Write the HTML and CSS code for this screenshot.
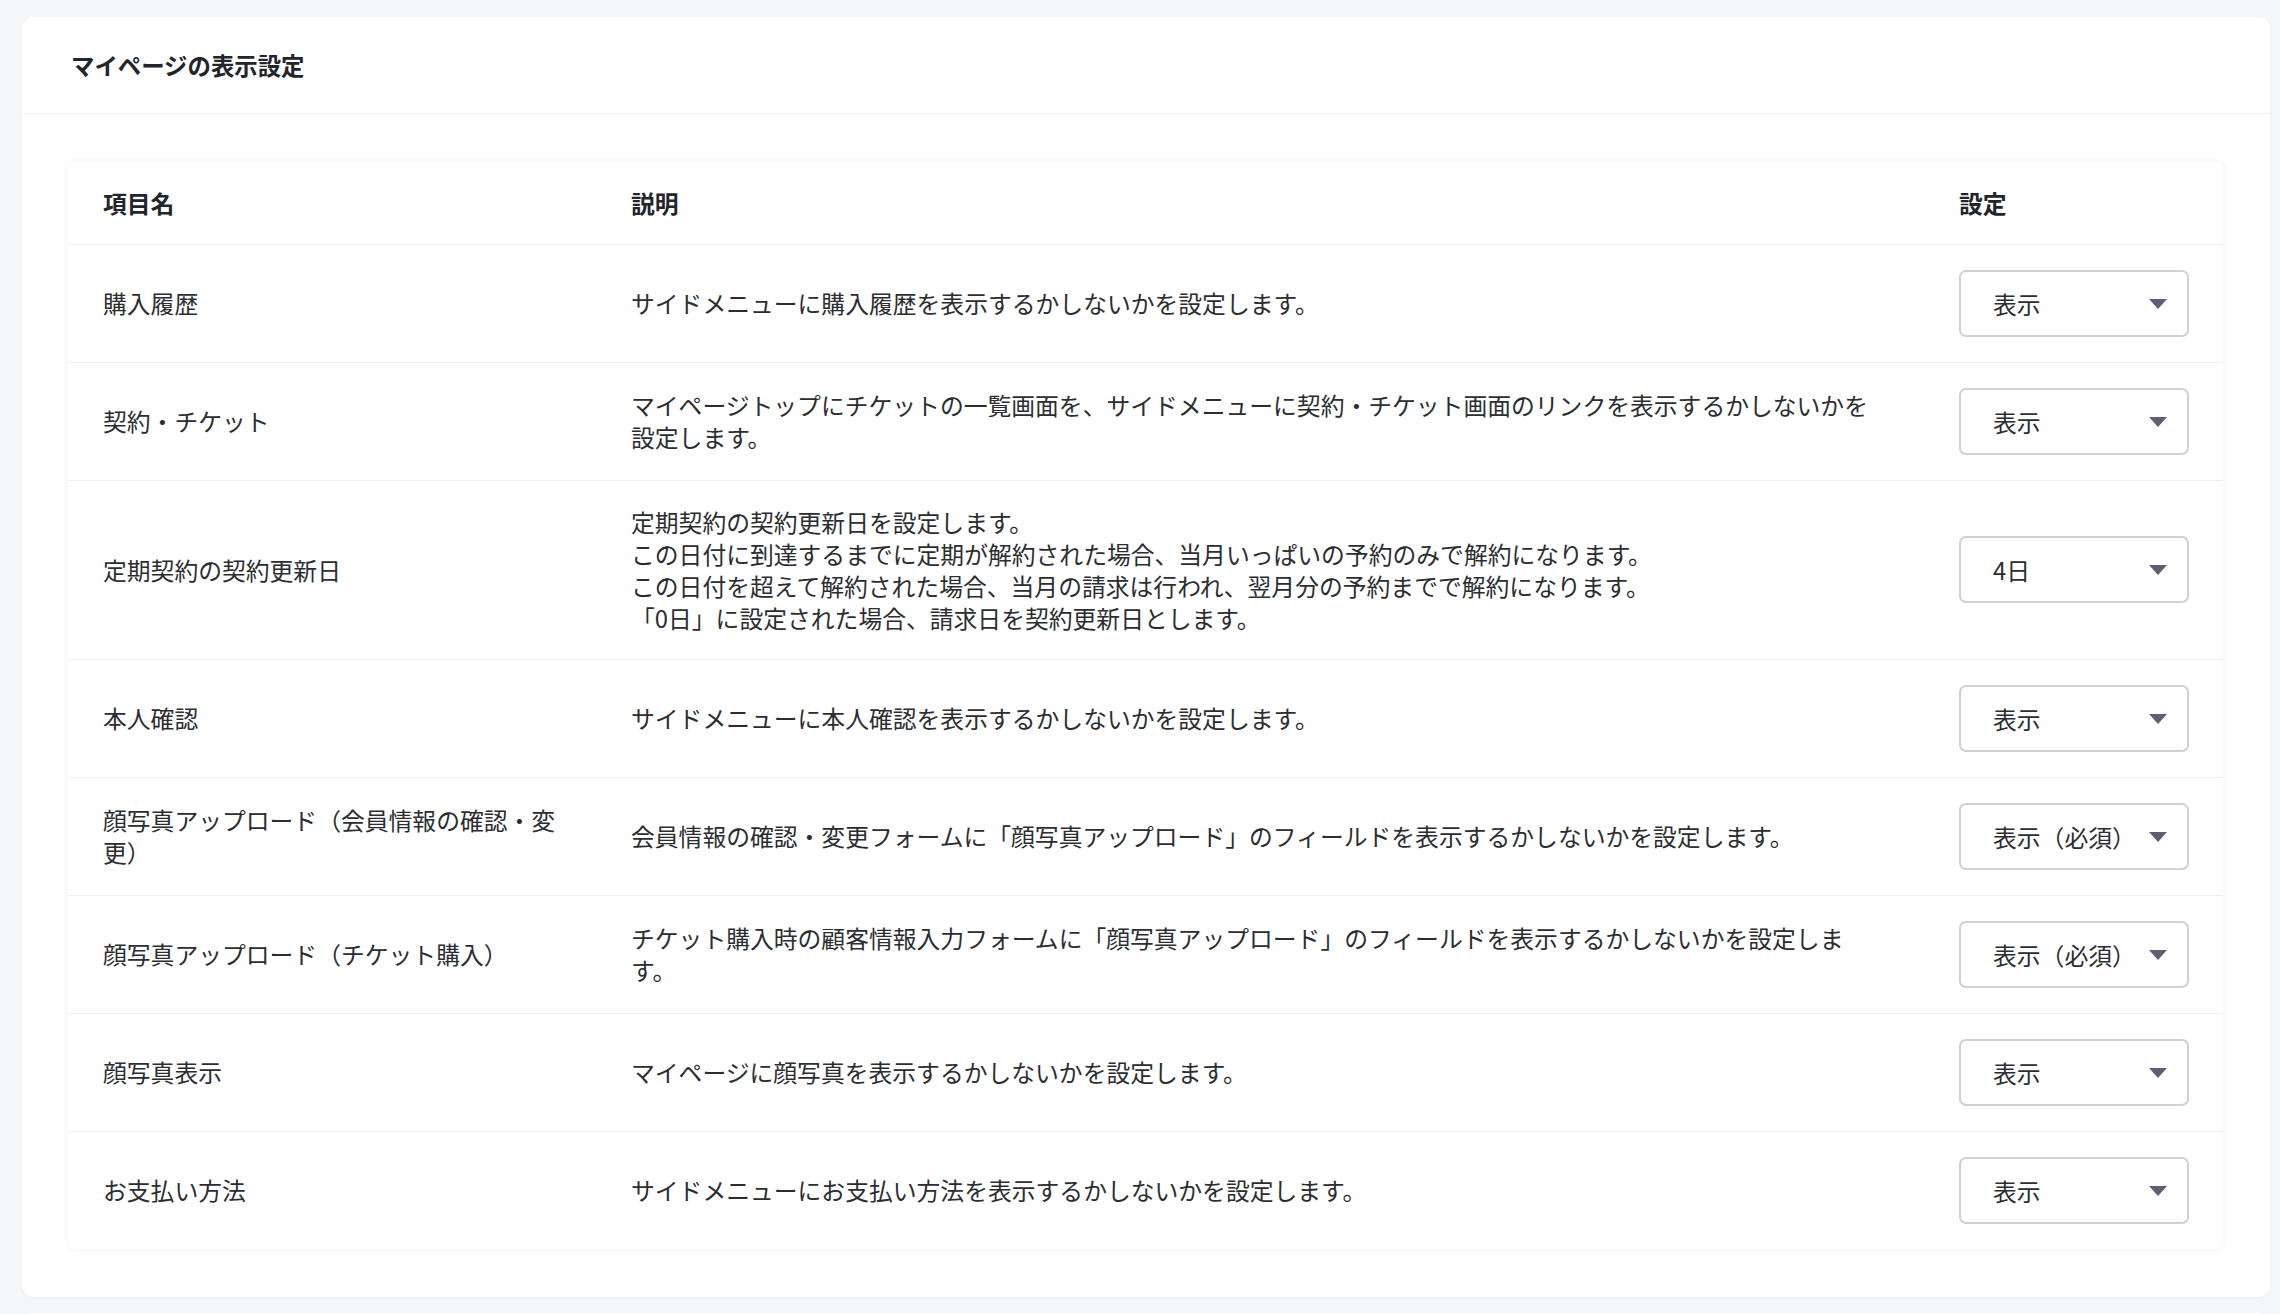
FILE: index.html
```html
<!DOCTYPE html>
<html lang="ja">
<head>
  <meta charset="UTF-8">
  <title>マイページの表示設定</title>
  <link rel="stylesheet" href="styles.css">
</head>
<body>
  <section class="card">
    <header class="card-header">
      <h1>マイページの表示設定</h1>
    </header>
    <div class="card-body">
      <div class="table-wrap">
        <table class="settings">
          <colgroup>
            <col class="col-name">
            <col class="col-desc">
            <col class="col-value">
          </colgroup>
          <thead>
            <tr>
              <th>項目名</th>
              <th class="desc">説明</th>
              <th>設定</th>
            </tr>
          </thead>
          <tbody>
            <tr>
              <td>購入履歴</td>
              <td class="desc">サイドメニューに購入履歴を表示するかしないかを設定します。</td>
              <td>
                <div class="select">
                  <select><option>表示</option><option>非表示</option></select>
                  <svg class="caret" width="18" height="10" viewBox="0 0 18 10"><path d="M0 0h18L9 10z"/></svg>
                </div>
              </td>
            </tr>
            <tr>
              <td>契約・チケット</td>
              <td class="desc">マイページトップにチケットの一覧画面を、サイドメニューに契約・チケット画面のリンクを表示するかしないかを設定します。</td>
              <td>
                <div class="select">
                  <select><option>表示</option><option>非表示</option></select>
                  <svg class="caret" width="18" height="10" viewBox="0 0 18 10"><path d="M0 0h18L9 10z"/></svg>
                </div>
              </td>
            </tr>
            <tr>
              <td>定期契約の契約更新日</td>
              <td class="desc">
                <p>定期契約の契約更新日を設定します。</p>
                <p>この日付に到達するまでに定期が解約された場合、当月いっぱいの予約のみで解約になります。</p>
                <p>この日付を超えて解約された場合、当月の請求は行われ、翌月分の予約までで解約になります。</p>
                <p>「0日」に設定された場合、請求日を契約更新日とします。</p>
              </td>
              <td>
                <div class="select">
                  <select><option>0日</option><option>1日</option><option>2日</option><option>3日</option><option selected>4日</option><option>5日</option></select>
                  <svg class="caret" width="18" height="10" viewBox="0 0 18 10"><path d="M0 0h18L9 10z"/></svg>
                </div>
              </td>
            </tr>
            <tr>
              <td>本人確認</td>
              <td class="desc">サイドメニューに本人確認を表示するかしないかを設定します。</td>
              <td>
                <div class="select">
                  <select><option>表示</option><option>非表示</option></select>
                  <svg class="caret" width="18" height="10" viewBox="0 0 18 10"><path d="M0 0h18L9 10z"/></svg>
                </div>
              </td>
            </tr>
            <tr>
              <td>顔写真アップロード（会員情報の確認・変更）</td>
              <td class="desc">会員情報の確認・変更フォームに「顔写真アップロード」のフィールドを表示するかしないかを設定します。</td>
              <td>
                <div class="select">
                  <select><option>表示（必須）</option><option>表示</option><option>非表示</option></select>
                  <svg class="caret" width="18" height="10" viewBox="0 0 18 10"><path d="M0 0h18L9 10z"/></svg>
                </div>
              </td>
            </tr>
            <tr>
              <td>顔写真アップロード（チケット購入）</td>
              <td class="desc">チケット購入時の顧客情報入力フォームに「顔写真アップロード」のフィールドを表示するかしないかを設定します。</td>
              <td>
                <div class="select">
                  <select><option>表示（必須）</option><option>表示</option><option>非表示</option></select>
                  <svg class="caret" width="18" height="10" viewBox="0 0 18 10"><path d="M0 0h18L9 10z"/></svg>
                </div>
              </td>
            </tr>
            <tr>
              <td>顔写真表示</td>
              <td class="desc">マイページに顔写真を表示するかしないかを設定します。</td>
              <td>
                <div class="select">
                  <select><option>表示</option><option>非表示</option></select>
                  <svg class="caret" width="18" height="10" viewBox="0 0 18 10"><path d="M0 0h18L9 10z"/></svg>
                </div>
              </td>
            </tr>
            <tr>
              <td>お支払い方法</td>
              <td class="desc">サイドメニューにお支払い方法を表示するかしないかを設定します。</td>
              <td>
                <div class="select">
                  <select><option>表示</option><option>非表示</option></select>
                  <svg class="caret" width="18" height="10" viewBox="0 0 18 10"><path d="M0 0h18L9 10z"/></svg>
                </div>
              </td>
            </tr>
          </tbody>
        </table>
      </div>
    </div>
  </section>

  <section class="card card-next"></section>
</body>
</html>
```

FILE: styles.css
```css
:root {
  --bg: #f5f6f8;
  --card: #ffffff;
  --line: #eef0f2;
  --text: #2b2d31;
  --text-strong: #22252b;
  --field-border: #cfd0d8;
  --caret: #5d6073;
  --radius: 12px;
}
* { box-sizing: border-box; margin: 0; padding: 0; }
body {
  font-family: "Noto Sans CJK JP", "Noto Sans", sans-serif;
  font-size: 23.8px;
  color: var(--text);
  background: var(--bg);
  padding: 17px 10px 0 22px;
}

.card {
  background: var(--card);
  border-radius: var(--radius);
  box-shadow: 0 1px 3px rgba(0,0,0,0.04);
}
.card-next { margin-top: 16px; height: 200px; }

.card-header {
  height: 97px;
  display: flex;
  align-items: center;
  padding: 0 49px;
  border-bottom: 1px solid var(--line);
}
.card-header h1 {
  font-size: 23.4px;
  font-weight: 700;
  color: var(--text-strong);
}

.card-body { padding: 48px 47px 48px 46px; }

.table-wrap {
  border-radius: 8px;
  overflow: hidden;
  box-shadow: 0 0 8px rgba(20,30,50,0.06);
}

table.settings {
  width: 100%;
  border-collapse: collapse;
  table-layout: fixed;
}
.col-name { width: 528px; }
.col-value { width: 299px; }

.settings th {
  height: 82px;
  padding: 0 35px;
  text-align: left;
  font-weight: 700;
  color: var(--text-strong);
  border-bottom: 1px solid var(--line);
}
.settings td {
  padding: 25px 35px;
  line-height: 32px;
  vertical-align: middle;
  border-bottom: 1px solid var(--line);
}
.settings tbody tr:last-child td { border-bottom: none; }
.settings .desc { padding-right: 44px; }

.select {
  position: relative;
  width: 230px;
}
.select select {
  appearance: none;
  -webkit-appearance: none;
  width: 100%;
  height: 67px;
  padding: 0 50px 0 32px;
  font-family: inherit;
  font-size: 23.8px;
  color: var(--text);
  background: #fff;
  border: 2px solid var(--field-border);
  border-radius: 7px;
  outline: none;
}
.select .caret {
  position: absolute;
  right: 22px;
  top: 29px;
  fill: var(--caret);
  pointer-events: none;
}
```
